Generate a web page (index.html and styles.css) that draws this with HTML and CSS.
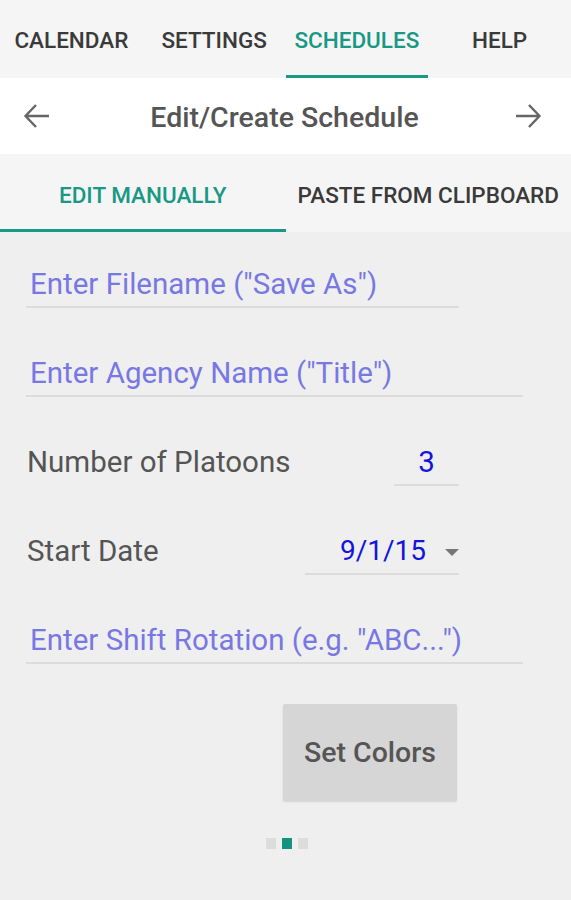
FILE: index.html
```html
<!DOCTYPE html>
<html>
<head>
  <title>Edit/Create Schedule</title>
  <link rel="stylesheet" href="styles.css">
</head>
<body>
  <div class="tabs">
    <div class="tab">CALENDAR</div>
    <div class="tab">SETTINGS</div>
    <div class="tab active">SCHEDULES</div>
    <div class="tab">HELP</div>
  </div>

  <div class="titlebar">
    <svg class="arrow" width="28" height="28" viewBox="0 0 28 28">
      <path d="M26 14H2.5M13 3L2.5 14 13 25" />
    </svg>
    <div class="title">Edit/Create Schedule</div>
    <svg class="arrow" width="28" height="28" viewBox="0 0 28 28">
      <path d="M2 14h23.5M15 3l10.5 11L15 25" />
    </svg>
  </div>

  <div class="subtabs">
    <div class="subtab active">EDIT MANUALLY</div>
    <div class="subtab">PASTE FROM CLIPBOARD</div>
  </div>

  <div class="form">
    <div class="field short"><span class="hint">Enter Filename ("Save As")</span></div>
    <div class="field wide"><span class="hint">Enter Agency Name ("Title")</span></div>

    <div class="row">
      <span class="label">Number of Platoons</span>
      <div class="value platoons">3</div>
    </div>

    <div class="row">
      <span class="label">Start Date</span>
      <div class="value date">
        <span>9/1/15</span>
        <span class="caret"></span>
      </div>
    </div>

    <div class="field wide"><span class="hint">Enter Shift Rotation (e.g. "ABC...")</span></div>

    <div class="actions">
      <button class="btn">Set Colors</button>
    </div>

    <div class="dots">
      <span class="dot"></span>
      <span class="dot on"></span>
      <span class="dot"></span>
    </div>
  </div>
</body>
</html>
```

FILE: styles.css
```css
body {
  margin: 0;
  background-color: #EFEFEF;
  font-family: Roboto, "Noto Sans", sans-serif;
  color: #555;
}

/* top tabs */
.tabs {
  display: flex;
  height: 78px;
  background-color: #F5F5F5;
}

.tab {
  flex: 1;
  display: flex;
  align-items: center;
  justify-content: center;
  font-size: 22.5px;
  font-weight: 500;
  color: #3A3A3A;
  border-bottom: 3px solid transparent;
  box-sizing: border-box;
  padding-top: 4px;
}

.tab.active {
  color: #199886;
  border-bottom-color: #199886;
}

/* title bar */
.titlebar {
  display: flex;
  align-items: center;
  justify-content: space-between;
  height: 76px;
  padding: 0 29px 0 23px;
  background-color: #FFF;
}

.title {
  font-size: 28.5px;
  font-weight: 500;
  color: #555;
  padding: 2px 0 0 4px;
}

.arrow path {
  fill: none;
  stroke: #666;
  stroke-width: 2.4;
}

/* sub tabs */
.subtabs {
  display: flex;
  height: 78px;
  background-color: #F5F5F5;
}

.subtab {
  flex: 1;
  display: flex;
  align-items: center;
  justify-content: center;
  font-size: 22.5px;
  font-weight: 500;
  color: #3A3A3A;
  border-bottom: 3px solid transparent;
  box-sizing: border-box;
  padding-top: 6px;
}

.subtab.active {
  color: #199886;
  border-bottom-color: #199886;
}

/* form */
.form {
  padding: 37px 0 0 26px;
}

.field,
.row {
  font-size: 29.5px;
  line-height: 30px;
  margin-bottom: 50px;
}

.field {
  padding: 0 0 7px 4px;
  border-bottom: 2px solid #DCDCDC;
}

.field.short {
  width: 429px;
}

.field.wide {
  width: 493px;
}

.hint {
  color: #7878E4;
}

.row {
  display: flex;
  justify-content: space-between;
  align-items: flex-end;
  width: 433px;
}

.label {
  color: #555;
  padding: 0 0 9px 1px;
}

.value {
  color: #1414DC;
  padding-bottom: 7px;
  border-bottom: 2px solid #DCDCDC;
}

.platoons {
  width: 65px;
  text-align: center;
}

.date {
  width: 154px;
  display: flex;
  align-items: center;
  justify-content: flex-end;
  gap: 19px;
  font-size: 28px;
}

.caret {
  width: 0;
  height: 0;
  border-left: 7px solid transparent;
  border-right: 7px solid transparent;
  border-top: 7px solid #777;
  margin-top: 2px;
}

.actions {
  display: flex;
  justify-content: flex-end;
  width: 431px;
  margin-top: -10px;
}

.btn {
  width: 174px;
  height: 97px;
  border: none;
  border-radius: 2px;
  background-color: #D6D6D6;
  box-shadow: 0 1px 2px rgba(0, 0, 0, 0.12);
  font-family: Roboto, sans-serif;
  font-size: 28.5px;
  font-weight: 500;
  color: #555;
}

.dots {
  display: flex;
  justify-content: center;
  gap: 6px;
  width: 522px;
  margin-top: 37px;
}

.dot {
  width: 10px;
  height: 11px;
  background-color: #DCDCDC;
}

.dot.on {
  background-color: #12937F;
}
```
